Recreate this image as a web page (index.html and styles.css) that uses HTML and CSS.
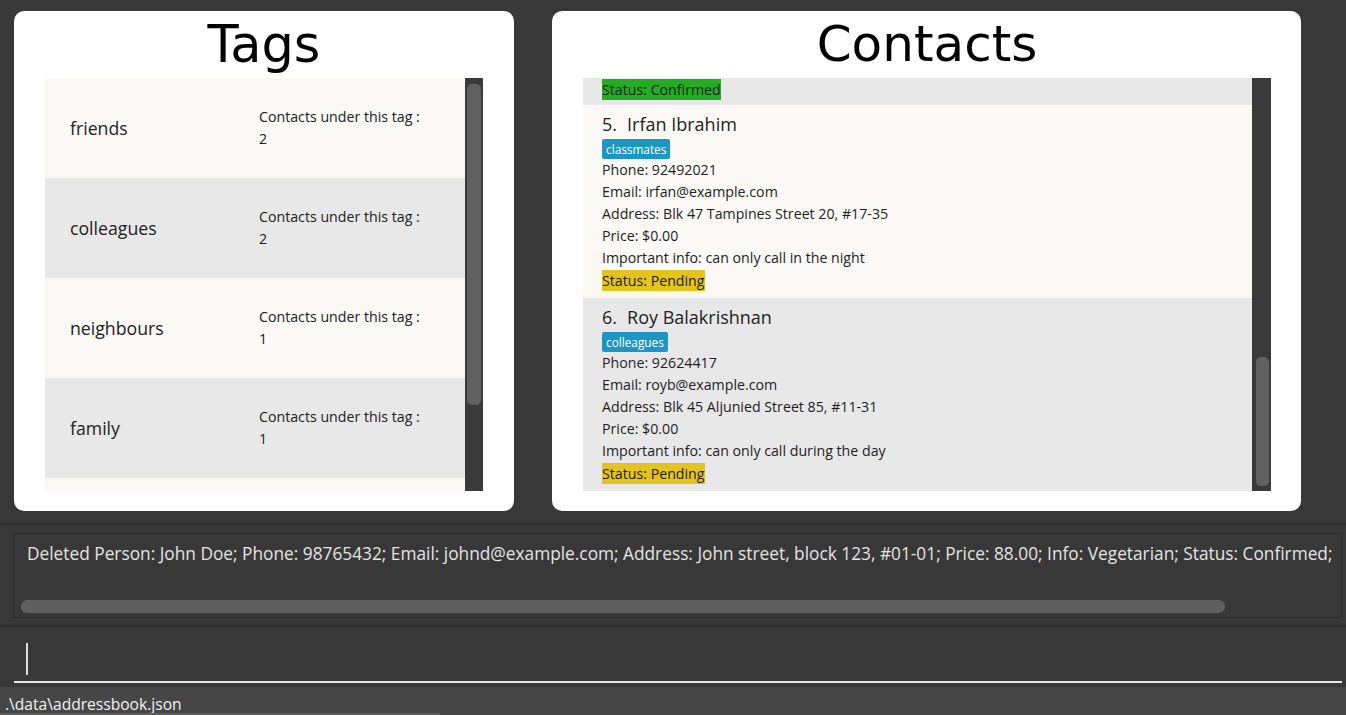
FILE: index.html
```html
<!DOCTYPE html>
<html lang="en">
<head>
<meta charset="utf-8">
<title>Address Book</title>
<link rel="stylesheet" href="styles.css">
</head>
<body>
<div class="app">
  <div class="top">
    <section class="card tags-card">
      <h1 class="card-title">Tags</h1>
      <div class="list-wrap">
        <div class="list">
          <div class="tag-row light">
            <div class="tag-name">friends</div>
            <div class="tag-count">Contacts under this tag :<br>2</div>
          </div>
          <div class="tag-row grey">
            <div class="tag-name">colleagues</div>
            <div class="tag-count">Contacts under this tag :<br>2</div>
          </div>
          <div class="tag-row light">
            <div class="tag-name">neighbours</div>
            <div class="tag-count">Contacts under this tag :<br>1</div>
          </div>
          <div class="tag-row grey">
            <div class="tag-name">family</div>
            <div class="tag-count">Contacts under this tag :<br>1</div>
          </div>
          <div class="tag-row light"></div>
        </div>
        <div class="vscroll tags-scroll"><div class="thumb"></div></div>
      </div>
    </section>
    <section class="card contacts-card">
      <h1 class="card-title">Contacts</h1>
      <div class="list-wrap">
        <div class="list">
          <div class="person partial grey">
            <span class="status confirmed">Status: Confirmed</span>
          </div>
          <div class="person light">
            <div class="pname"><span class="pidx">5.</span>Irfan Ibrahim</div>
            <div class="tags"><span class="badge">classmates</span></div>
            <div class="field">Phone: 92492021</div>
            <div class="field">Email: irfan@example.com</div>
            <div class="field">Address: Blk 47 Tampines Street 20, #17-35</div>
            <div class="field">Price: $0.00</div>
            <div class="field">Important info: can only call in the night</div>
            <div class="field"><span class="status pending">Status: Pending</span></div>
          </div>
          <div class="person grey">
            <div class="pname"><span class="pidx">6.</span>Roy Balakrishnan</div>
            <div class="tags"><span class="badge">colleagues</span></div>
            <div class="field">Phone: 92624417</div>
            <div class="field">Email: royb@example.com</div>
            <div class="field">Address: Blk 45 Aljunied Street 85, #11-31</div>
            <div class="field">Price: $0.00</div>
            <div class="field">Important info: can only call during the day</div>
            <div class="field"><span class="status pending">Status: Pending</span></div>
          </div>
        </div>
        <div class="vscroll contacts-scroll"><div class="thumb"></div></div>
      </div>
    </section>
  </div>
  <div class="result-section">
    <div class="result-box">
      <div class="result-text">Deleted Person: John Doe; Phone: 98765432; Email: johnd@example.com; Address: John street, block 123, #01-01; Price: 88.00; Info: Vegetarian; Status: Confirmed;</div>
      <div class="hscroll"><div class="hthumb"></div></div>
    </div>
  </div>
  <div class="command-section">
    <div class="command-box"><span class="caret"></span></div>
  </div>
  <div class="status-bar">
    <span class="status-path">.\data\addressbook.json</span>
    <div class="status-line"></div>
  </div>
</div>
</body>
</html>
```
FILE: styles.css
```css
* { box-sizing: border-box; }
html, body {
  margin: 0;
  padding: 0;
  background: #383838;
  overflow: hidden;
}
.app {
  width: 1346px;
  height: 715px;
  display: flex;
  flex-direction: column;
  font-family: "Open Sans", "Noto Sans", sans-serif;
}
.top {
  height: 523px;
  padding: 11px 45px 0 14px;
  display: flex;
  gap: 38px;
}
.card {
  background: #ffffff;
  border-radius: 10px;
  height: 500px;
  display: flex;
  flex-direction: column;
  padding: 0 31px 20px 31px;
}
.tags-card { width: 500px; }
.contacts-card { width: 749px; padding-right: 30px; }
.card-title {
  margin: 0;
  height: 67px;
  font-family: "DejaVu Sans", sans-serif;
  font-weight: normal;
  font-size: 50px;
  line-height: 67px;
  text-align: center;
  color: #000;
}
.tags-card .card-title { font-size: 51px; }
.list-wrap {
  flex: 1;
  display: flex;
  overflow: hidden;
}
.list {
  flex: 1;
  overflow: hidden;
}
.light { background: #faf9f5; }
.grey { background: #e8e8e8; }
.vscroll {
  background: #3a3a3a;
  position: relative;
}
.tags-scroll { width: 18px; }
.contacts-scroll { width: 19px; }
.thumb {
  position: absolute;
  background: #616161;
  border-radius: 5px;
}
.tags-scroll .thumb { left: 2px; right: 2px; top: 6px; height: 321px; }
.contacts-scroll .thumb { left: 4px; right: 2px; top: 279px; height: 129px; }

.tag-row {
  height: 100px;
  display: flex;
  align-items: center;
  color: #222;
}
.tag-name {
  width: 214px;
  padding-left: 25px;
  font-size: 17.7px;
}
.tag-count {
  font-size: 14.2px;
  line-height: 22px;
}

.person {
  padding: 5px 19px 7px 19px;
  color: #1e1e1e;
}
.person.partial {
  height: 27px;
  padding-top: 1px;
}
.pname {
  height: 28px;
  font-size: 18px;
  line-height: 28px;
}
.pidx { margin-right: 10px; }
.tags {
  height: 20px;
  margin-top: 1px;
  display: flex;
}
.badge {
  background: #1d97c2;
  color: #ffffff;
  font-size: 11.8px;
  line-height: 20px;
  height: 20px;
  padding: 0 4px;
  border-radius: 2px;
}
.field {
  height: 22px;
  font-size: 14.2px;
  line-height: 22px;
}
.status {
  display: inline-block;
  font-size: 14.2px;
  line-height: 21px;
  height: 21px;
  vertical-align: top;
  margin-top: 1px;
}
.confirmed { background: #22ad22; margin-top: 0; }
.pending { background: #e3c41e; }

.result-section {
  height: 102px;
  border-top: 2px solid #2c2c2c;
  padding: 8px 4px 5px 13px;
}
.result-box {
  height: 85px;
  border: 1px solid #2a2a2a;
  padding: 9px 0 0 13px;
  display: flex;
  flex-direction: column;
}
.result-text {
  color: #e4e4e4;
  font-size: 17.3px;
  line-height: 22px;
  white-space: nowrap;
}
.hscroll {
  margin-top: 35px;
  height: 13px;
}
.hthumb {
  width: 1204px;
  height: 13px;
  background: #5f5f5f;
  border-radius: 6px;
  margin-left: -6px;
}
.command-section {
  height: 62px;
  border-top: 2px solid #2c2c2c;
  padding: 0 4px 0 14px;
}
.command-box {
  height: 56px;
  border-bottom: 2px solid #e8e8e8;
  padding: 16px 0 0 12px;
}
.caret {
  display: block;
  width: 2px;
  height: 32px;
  background: #dcdcdc;
}
.status-bar {
  flex: 1;
  background: #464646;
  position: relative;
  padding: 6px 0 0 5px;
}
.status-path {
  color: #f2f2f2;
  font-size: 15.6px;
  line-height: 22px;
}
.status-line {
  position: absolute;
  left: 0;
  bottom: 0;
  width: 440px;
  height: 2px;
  background: #5c5c5c;
}
```
